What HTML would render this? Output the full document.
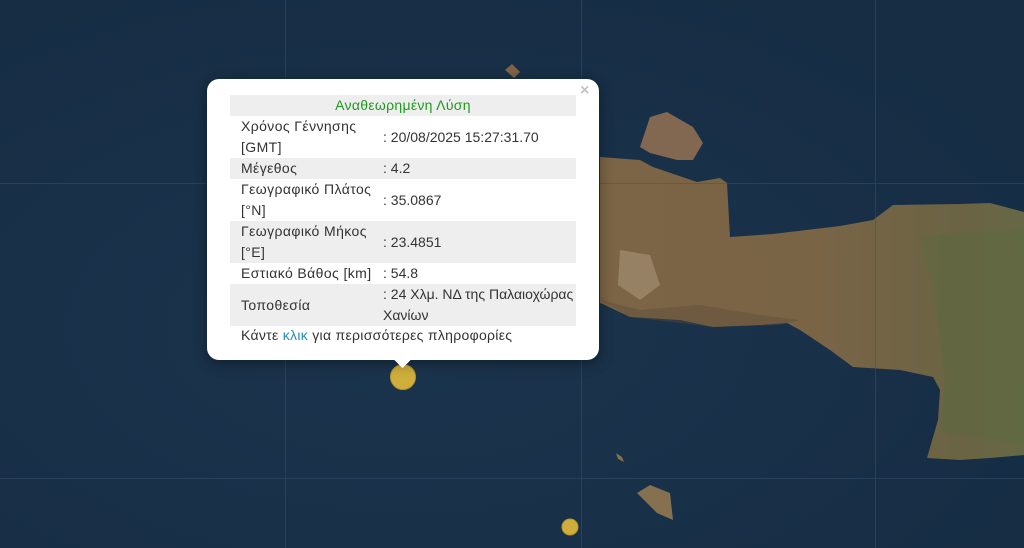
<!DOCTYPE html>
<html><head><meta charset="utf-8"><style>
html,body{margin:0;padding:0;width:1024px;height:548px;overflow:hidden;background:#19314a;font-family:"Liberation Sans",Arial,sans-serif}
#map{position:absolute;left:0;top:0}
.popup{position:absolute;left:207px;top:79px;width:392px;height:281px;background:#fff;border-radius:12px;box-shadow:0 3px 14px rgba(0,0,0,.4)}
.tipw{position:absolute;left:391px;top:359px;width:24px;height:12px;overflow:hidden}
.tip{position:absolute;left:4px;top:-9px;width:15px;height:15px;background:#fff;transform:rotate(45deg)}
.close{position:absolute;left:580px;top:82px;color:#c3c3c3;font:bold 16px "Liberation Sans",sans-serif}
table{position:absolute;left:230px;top:95px;width:346px;border-collapse:collapse;font-size:14px;color:#333;line-height:21px}
td{padding:0 0 0 11px;vertical-align:middle}
td.l{letter-spacing:0.4px}
td.v{padding-left:0}
tr.g{background:#eee}
.h{color:#1f9a1f;text-align:center;padding:0;letter-spacing:0.3px}
.foot{position:absolute;left:241px;top:325px;font-size:14px;color:#333;line-height:21px;letter-spacing:0.3px}
.foot span{color:#2a8ab8}
</style></head><body>
<svg id="map" width="1024" height="548" viewBox="0 0 1024 548">
<defs><radialGradient id="s" cx="40%" cy="60%" r="70%"><stop offset="0" stop-color="#1b344d"/><stop offset="1" stop-color="#162d44"/></radialGradient>
<linearGradient id="l" x1="0" y1="0" x2="1" y2="0"><stop offset="0" stop-color="#7c6446"/><stop offset="0.5" stop-color="#7a6446"/><stop offset="0.85" stop-color="#6a6444"/><stop offset="1" stop-color="#666845"/></linearGradient></defs>
<rect width="1024" height="548" fill="url(#s)"/>
<path d="M600,157 L640,160 L653,167 L697,182 L720,178 L727,183 L730,237 L773,234 L840,226 L873,220 L893,205 L960,204 L990,203 L1024,212 L1024,455 L990,458 L960,460 L927,458 L938,420 L940,390 L933,377 L900,370 L853,367 L830,350 L800,330 L787,323 L760,325 L713,327 L680,320 L630,317 L605,305 L600,303 Z" fill="url(#l)"/>
<path d="M920,235 L1024,230 L1024,445 L940,432 L945,380 L935,300 Z" fill="#5c6a40" opacity=".55"/>
<path d="M620,250 L650,255 L660,285 L640,300 L618,285 Z" fill="#a89478" opacity=".6"/>
<path d="M600,300 L640,310 L700,305 L760,315 L800,320 L780,325 L713,327 L630,317 Z" fill="#5a4a36" opacity=".4"/>
<path d="M650,117 L667,112 L693,127 L703,143 L693,160 L677,160 L650,153 L640,147 Z" fill="#826850"/>
<path d="M637,493 L650,485 L670,493 L673,520 L657,513 Z" fill="#857050"/>
<path d="M616,453 L622,457 L624,462 L618,459 Z" fill="#857050"/>
<path d="M505,70 L512,64 L520,72 L514,78 Z" fill="#806448"/>
<g stroke="#3a5470" stroke-width="1" opacity=".5">
<line x1="285.5" y1="0" x2="285.5" y2="548"/><line x1="581.5" y1="0" x2="581.5" y2="548"/><line x1="875.5" y1="0" x2="875.5" y2="548"/>
<line x1="0" y1="183.5" x2="1024" y2="183.5"/><line x1="0" y1="478.5" x2="1024" y2="478.5"/></g>
<circle cx="403" cy="377" r="12.5" fill="#cfae3c" stroke="#b89628" stroke-width="1"/>
<circle cx="570" cy="527" r="8" fill="#cfae3c" stroke="#b89628" stroke-width="1"/>
</svg>
<div class="popup"></div>
<div class="tipw"><div class="tip"></div></div>
<div class="close">×</div>
<table>
<tr class="g"><td colspan="2" class="h">Αναθεωρημένη Λύση</td></tr>
<tr><td class="l" style="width:142px">Χρόνος Γέννησης<br>[GMT]</td><td class="v">: 20/08/2025 15:27:31.70</td></tr>
<tr class="g"><td class="l">Μέγεθος</td><td class="v">: 4.2</td></tr>
<tr><td class="l">Γεωγραφικό Πλάτος<br>[°N]</td><td class="v">: 35.0867</td></tr>
<tr class="g"><td class="l">Γεωγραφικό Μήκος<br>[°E]</td><td class="v">: 23.4851</td></tr>
<tr><td class="l">Εστιακό Βάθος [km]</td><td class="v">: 54.8</td></tr>
<tr class="g"><td class="l">Τοποθεσία</td><td class="v">: 24 Χλμ. ΝΔ της Παλαιοχώρας Χανίων</td></tr>
</table>
<div class="foot">Κάντε <span>κλικ</span> για περισσότερες πληροφορίες</div>
</body></html>
